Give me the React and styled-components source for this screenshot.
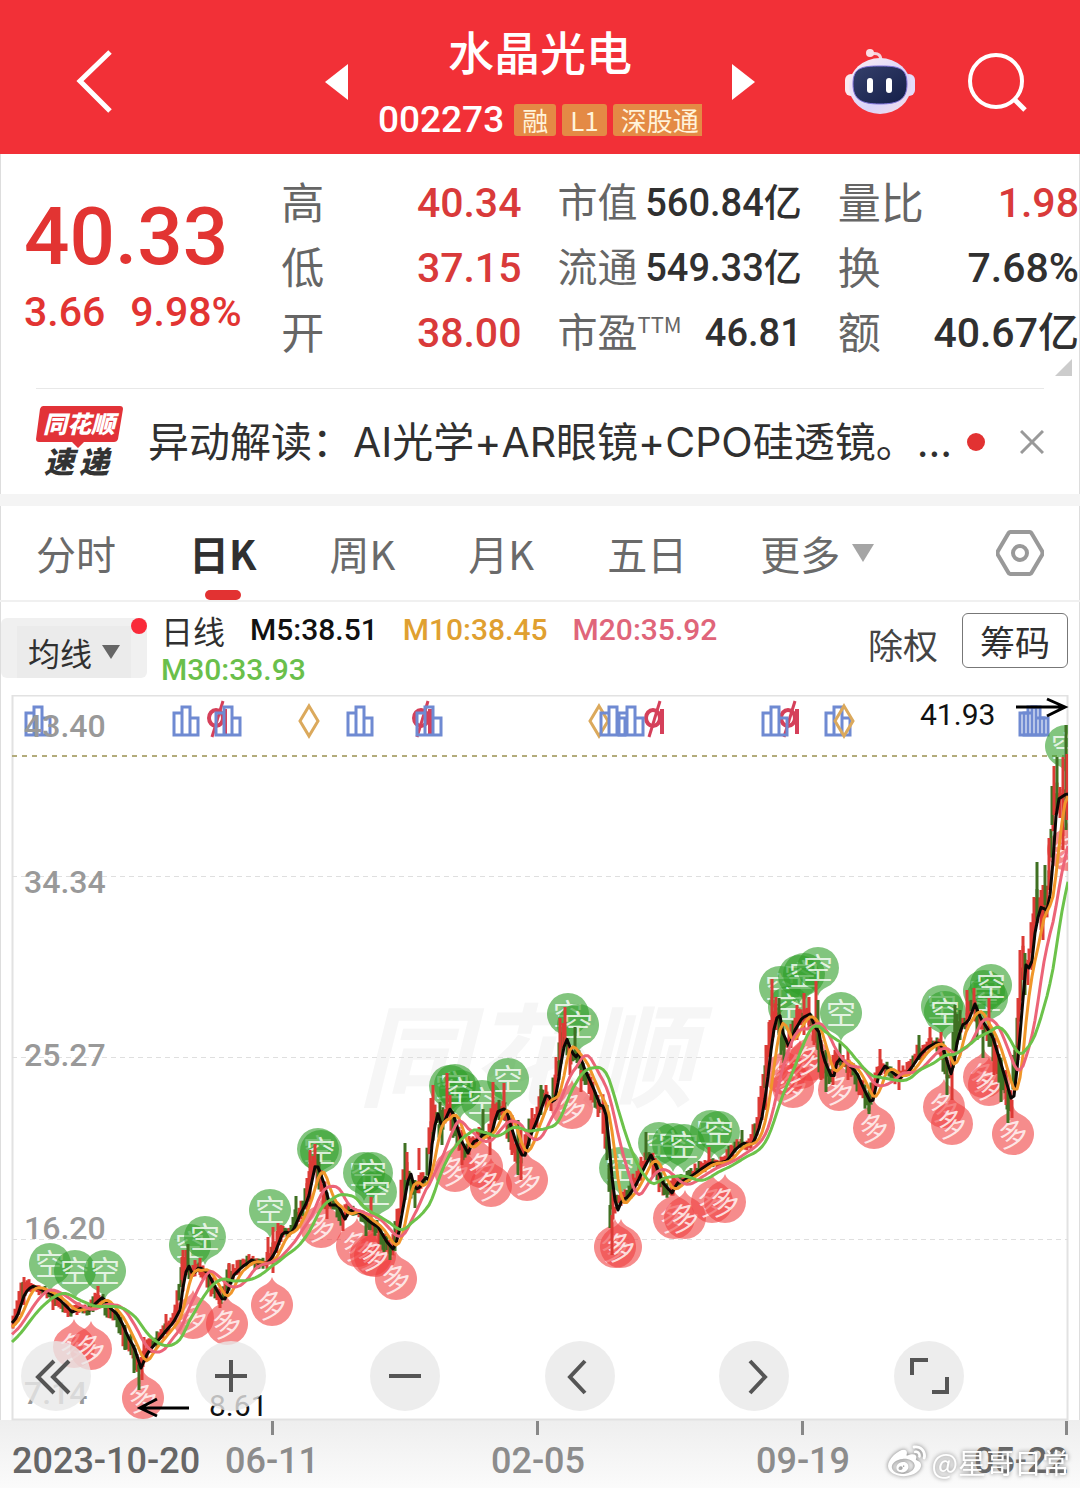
import React from 'react';
import styled, { createGlobalStyle } from 'styled-components';
import { FaWeibo } from 'react-icons/fa';

const GlobalStyle = createGlobalStyle`
  * {
    box-sizing: border-box;
  }

  body {
    margin: 0;
    background: #fff;
    color: #303030;
    font-family: 'Noto Sans CJK SC', sans-serif;
  }

  button {
    margin: 0;
    padding: 0;
    border: 0;
    background: none;
    color: inherit;
    font: inherit;
    cursor: pointer;
  }

  svg {
    display: block;
  }
`;

const tags = ['融', 'L1', '深股通'];

const quoteColumns = [
  [
    { label: '高', value: '40.34', up: true },
    { label: '低', value: '37.15', up: true },
    { label: '开', value: '38.00', up: true },
  ],
  [
    { label: '市值', value: '560.84亿', small: true },
    { label: '流通', value: '549.33亿', small: true },
    { label: '市盈', sup: 'TTM', value: '46.81', small: true },
  ],
  [
    { label: '量比', value: '1.98', up: true },
    { label: '换', value: '7.68%' },
    { label: '额', value: '40.67亿' },
  ],
];

const tabs = ['分时', '日K', '周K', '月K', '五日'];

const averages = [
  { label: 'M5:38.51', color: '#111' },
  { label: 'M10:38.45', color: '#e0a030' },
  { label: 'M20:35.92', color: '#e0657a' },
  { label: 'M30:33.93', color: '#6abf4b' },
];

// five day average as x, y pairs
const ma5 = [
  -60, 1395, -40, 1375, -20, 1352, 0, 1333, 12, 1323, 17, 1317, 25, 1293, 32, 1286, 40, 1289, 50, 1293,
  60, 1300, 72, 1312, 82, 1308, 90, 1310, 97, 1302, 103, 1297, 110, 1308, 117, 1314, 123, 1325, 128, 1337,
  134, 1347, 141, 1368, 148, 1352, 157, 1342, 165, 1332, 173, 1323, 180, 1310, 184, 1280, 188, 1264,
  193, 1275, 199, 1267, 208, 1273, 215, 1287, 224, 1302, 233, 1276, 242, 1267, 252, 1260, 260, 1264,
  268, 1263, 275, 1253, 283, 1232, 292, 1233, 300, 1215, 308, 1200, 316, 1162, 323, 1180, 330, 1205,
  338, 1205, 345, 1219, 350, 1210, 359, 1212, 370, 1222, 378, 1227, 387, 1242, 394, 1250, 398, 1237,
  405, 1197, 410, 1170, 415, 1190, 420, 1187, 425, 1177, 429, 1180, 433, 1133, 438, 1114, 442, 1127,
  446, 1118, 451, 1107, 457, 1127, 462, 1142, 468, 1153, 473, 1142, 478, 1140, 485, 1132, 491, 1137,
  497, 1112, 506, 1108, 510, 1123, 517, 1145, 524, 1159, 530, 1137, 538, 1118, 547, 1093, 554, 1105,
  558, 1083, 562, 1057, 566, 1037, 570, 1047, 575, 1058, 579, 1053, 585, 1070, 593, 1087, 600, 1105,
  605, 1107, 608, 1130, 612, 1177, 616, 1208, 618, 1210, 622, 1200, 628, 1197, 637, 1183, 643, 1170,
  651, 1155, 657, 1168, 663, 1183, 672, 1193, 677, 1183, 685, 1180, 693, 1175, 700, 1170, 710, 1163,
  719, 1163, 727, 1161, 735, 1150, 743, 1143, 752, 1145, 758, 1132, 763, 1113, 768, 1077, 773, 1033,
  779, 1010, 783, 1033, 789, 1047, 795, 1030, 802, 1018, 810, 1014, 815, 1027, 819, 1032, 823, 1057,
  833, 1080, 838, 1058, 847, 1063, 857, 1073, 863, 1087, 872, 1105, 878, 1077, 885, 1066, 892, 1072,
  900, 1078, 910, 1070, 920, 1055, 928, 1047, 938, 1042, 943, 1048, 952, 1077, 957, 1043, 962, 1025,
  968, 1022, 975, 1004, 980, 1017, 987, 1028, 993, 1038, 1002, 1067, 1013, 1105, 1018, 1060, 1022, 1010,
  1026, 965, 1031, 970, 1035, 933, 1040, 907, 1047, 910, 1051, 890, 1055, 833, 1057, 800, 1066, 794,
  1074, 794,
];

// widest bars: x, top, bottom, r(ise) or f(all)
const swings = `24 1277 1305 r,53 1290 1310 r,68 1303 1317 r,98 1286 1305 r,125 1325 1350 f,134 1345 1373 f,
139 1365 1390 f,142 1365 1380 r,144 1337 1355 r,166 1314 1330 r,182 1257 1280 r,186 1250 1275 r,188 1244 1270 f,
200 1258 1275 r,220 1290 1308 r,229 1263 1280 r,268 1237 1257 r,273 1227 1273 r,278 1223 1240 r,296 1196 1230 f,
307 1178 1210 r,310 1150 1200 r,315 1144 1170 r,318 1154 1180 f,327 1200 1219 r,343 1215 1231 r,366 1215 1236 f,
371 1197 1220 r,384 1240 1252 f,390 1245 1260 f,405 1143 1200 f,407 1152 1180 r,415 1180 1208 f,419 1148 1170 r,
431 1098 1132 r,433 1085 1130 r,440 1102 1135 f,442 1110 1145 f,447 1073 1120 r,450 1095 1120 r,462 1130 1165 r,
483 1109 1140 f,490 1130 1155 r,493 1082 1125 r,499 1100 1120 f,504 1083 1120 r,512 1115 1155 r,518 1120 1175 f,
521 1130 1180 r,532 1108 1130 r,541 1085 1115 f,546 1085 1110 r,556 1057 1100 r,560 1018 1060 r,565 1007 1045 r,
570 1050 1075 r,575 1027 1060 f,581 1070 1092 r,598 1095 1117 r,607 1105 1150 f,610 1205 1228 f,612 1215 1255 r,
646 1132 1160 f,664 1178 1195 f,709 1147 1165 r,742 1130 1148 f,762 1090 1120 r,766 1045 1110 r,770 1020 1050 r,
772 979 1040 r,776 997 1030 r,779 998 1035 f,784 1040 1063 f,797 1005 1040 r,804 993 1035 r,809 997 1025 r,
814 1020 1045 r,816 981 1025 r,818 1000 1050 f,821 1040 1080 r,826 1050 1092 f,833 1070 1085 r,840 1043 1065 f,
848 1050 1080 r,869 1090 1114 f,880 1049 1075 r,899 1060 1090 r,919 1035 1060 f,930 1027 1050 r,941 1032 1060 r,
947 1060 1095 f,952 1065 1100 r,955 1005 1055 f,960 1010 1040 f,967 990 1030 r,974 988 1010 r,977 1005 1040 f,
983 1030 1058 f,989 998 1030 r,994 1040 1075 r,1001 1060 1102 f,1006 1070 1105 r,1008 1090 1123 f,1012 1100 1118 r,
1015 1050 1090 f,1018 998 1060 r,1020 950 1010 r,1023 936 980 r,1025 953 995 f,1028 960 985 r,1032 925 970 r,
1034 897 940 r,1037 862 920 f,1041 890 930 r,1043 885 940 r,1045 865 905 f,1049 838 890 r,1052 786 825 f,
1054 766 815 r,1057 757 810 f,1060 787 818 r,1063 757 850 r,1066 725 830 f,1067 754 820 r`
  .split(',')
  .map((s) => s.trim().split(' '))
  .map(([x, top, bottom, kind]) => ({ x: +x, top: +top, bottom: +bottom, rise: kind === 'r' }));

const sellPins = [
  [50, 1264], [75, 1271], [105, 1271], [190, 1245], [205, 1237], [270, 1210], [318, 1149], [321, 1151],
  [364, 1173], [372, 1173], [376, 1192], [450, 1086], [455, 1085], [460, 1091], [482, 1101], [508, 1079],
  [568, 1014], [578, 1025], [620, 1168], [659, 1143], [673, 1144], [684, 1145], [711, 1131], [719, 1132],
  [780, 987], [789, 1007], [799, 976], [804, 974], [818, 968], [841, 1013], [942, 1006], [945, 1012],
  [984, 991], [987, 998], [991, 985], [1066, 746],
];

const buyPins = [
  [74, 1347], [91, 1349], [143, 1398], [193, 1318], [227, 1324], [272, 1305], [321, 1227], [357, 1246],
  [371, 1255], [375, 1256], [396, 1279], [455, 1171], [482, 1167], [491, 1186], [527, 1180], [572, 1108],
  [615, 1247], [621, 1247], [674, 1218], [685, 1218], [712, 1202], [725, 1202], [785, 1074], [793, 1087],
  [800, 1068], [810, 1060], [839, 1090], [874, 1128], [944, 1107], [952, 1124], [984, 1077], [989, 1085],
  [1013, 1134], [1068, 850],
];

const STEP = 2;

const ma5At = (x) => {
  let i = 0;
  while (i < ma5.length - 4 && ma5[i + 2] < x) i += 2;
  const part = Math.min(1, (x - ma5[i]) / (ma5[i + 2] - ma5[i]));
  return ma5[i + 1] + part * (ma5[i + 3] - ma5[i + 1]);
};

const averageAt = (x, span) => {
  let sum = 0;
  let count = 0;
  for (let d = 0; d <= span; d += 2) {
    sum += ma5At(x - d);
    count += 1;
  }
  return sum / count;
};

const linePath = (span) => {
  let d = '';
  for (let x = 12; x <= 1068; x += 3) {
    const y = span ? averageAt(x, span) : ma5At(x);
    d += `${d ? 'L' : 'M'}${x} ${y.toFixed(1)}`;
  }
  return d;
};

const makeCandles = () => {
  const out = [];
  let seed = 7;
  const next = () => {
    seed = (seed * 16807) % 2147483647;
    return seed / 2147483647;
  };
  for (let x = 13; x < 1066; x += STEP) {
    const mid = ma5At(x + 3);
    const slope = Math.abs(ma5At(x + 5) - ma5At(x - 1));
    const reach = Math.min(18, 4 + slope * 0.5);
    const falling = ma5At(x + 4) > ma5At(x);
    const top = mid - reach * (0.3 + next());
    const bottom = mid + reach * (0.3 + next());
    out.push({ x, top, bottom, rise: next() > (falling ? 0.55 : 0.25) });
  }
  return [...out, ...swings];
};

const candles = makeCandles();

const BarsIcon = ({ x }) => (
  <path
    d={`M${x + 1} 735V713h8V707h8V718h8V735ZM${x + 9} 713V735M${x + 17} 718V735`}
    fill='none'
    stroke='#6f8ad2'
    strokeWidth='3'
  />
);

const DiamondIcon = ({ x }) => (
  <path d={`M${x} 706L${x + 9} 721L${x} 736L${x - 9} 721Z`} fill='none' stroke='#dba95c' strokeWidth='3' />
);

const SlashIcon = ({ x }) => (
  <g fill='none' stroke='#d5405a'>
    <ellipse cx={x - 1} cy='718' rx='7' ry='8' strokeWidth='4' />
    <path d={`M${x + 8} 709V734`} strokeWidth='4' />
    <path d={`M${x - 5} 737L${x + 6} 701`} strokeWidth='3' />
  </g>
);

const Pin = ({ x, y, sell }) => {
  const tail = sell ? 1 : -1;
  return (
    <g>
      <path
        d={`M${x - 9} ${y + 19 * tail}Q${x - 2} ${y + 22 * tail} ${x} ${y + 28 * tail}Q${x + 2} ${y + 22 * tail} ${
          x + 9
        } ${y + 19 * tail}A21 21 0 1 ${sell ? 0 : 1} ${x - 9} ${y + 19 * tail}Z`}
        fill={sell ? '#2f9f28' : '#f04040'}
        fillOpacity='0.6'
      />
      <PinText x={x} y={y + 11} transform={sell ? undefined : `rotate(-14 ${x} ${y})`}>
        {sell ? '空' : '多'}
      </PinText>
    </g>
  );
};

const Chart = () => (
  <ChartSvg viewBox='0 695 1080 793' role='img' aria-label='日K'>
    <defs>
      <linearGradient id='axis' x1='0' y1='0' x2='0' y2='1'>
        <stop offset='0' stopColor='#eeeeee' />
        <stop offset='1' stopColor='#fbfbfb' />
      </linearGradient>
      <clipPath id='plot'>
        <rect x='10' y='695' width='1058' height='725' />
      </clipPath>
    </defs>
    <rect x='0' y='1420' width='1080' height='68' fill='url(#axis)' />
    <Watermark x='358' y='1098'>
      同花顺
    </Watermark>
    <rect x='12.5' y='695.5' width='1055' height='724' fill='none' stroke='#e2e2e2' strokeWidth='2' />
    <path d='M12 876.5H1068M12 1057.5H1068M12 1239.5H1068' stroke='#dfdfdf' strokeDasharray='5 4' />
    <path d='M12 756H1068' stroke='#b3ac7c' strokeWidth='2' strokeDasharray='5 5' />

    {[214, 419, 651, 786].map((x) => (
      <SlashIcon key={x} x={x + 3} />
    ))}
    <DiamondIcon x={309} />
    <DiamondIcon x={599} />
    {[25, 173, 215, 347, 416, 600, 618, 762, 825, 1019, 1023].map((x) => (
      <BarsIcon key={x} x={x} />
    ))}
    <DiamondIcon x={844} />

    {[
      ['43.40', 737],
      ['34.34', 893],
      ['25.27', 1066],
      ['16.20', 1239],
      ['7.14', 1404],
    ].map(([label, y]) => (
      <ScaleText key={label} x='24' y={y}>
        {label}
      </ScaleText>
    ))}

    <g clipPath='url(#plot)'>
      {buyPins.map(([x, y]) => (
        <Pin key={`${x}-${y}`} x={x} y={y} />
      ))}
      {sellPins.map(([x, y]) => (
        <Pin key={`${x}-${y}`} x={x} y={y} sell />
      ))}
      {candles.map((c, i) => (
        <rect
          key={i}
          x={c.x - 1.5}
          y={c.top}
          width='3'
          height={c.bottom - c.top}
          fill={c.rise ? '#dc3a35' : '#3f7022'}
        />
      ))}
      <g fill='none' strokeWidth='3' strokeLinejoin='round'>
        <path d={linePath(0)} stroke='#0c0805' />
        <path d={linePath(10)} stroke='#f0962a' />
        <path d={linePath(26)} stroke='#ec6478' />
        <path d={linePath(42)} stroke='#6cc24a' />
      </g>
    </g>

    <PeakText x='920' y='725'>
      41.93
    </PeakText>
    <path d='M1016 707H1065M1047 699L1065 707L1047 716' fill='none' stroke='#000' strokeWidth='3' />
    <PeakText x='209' y='1416'>
      8.61
    </PeakText>
    <path d='M189 1408H140M157 1399L140 1408L157 1416' fill='none' stroke='#000' strokeWidth='3' />

    <path d='M272.5 1421V1435M537.5 1421V1435M802.5 1421V1435M1066.5 1421V1435' stroke='#888' strokeWidth='3' />
    <DateText x='12' y='1473' fill='#666'>
      2023-10-20
    </DateText>
    {[
      ['06-11', 272],
      ['02-05', 538],
      ['09-19', 803],
    ].map(([label, x]) => (
      <DateText key={label} x={x} y='1473' fill='#8c8c8c' textAnchor='middle'>
        {label}
      </DateText>
    ))}
    <DateText x='1068' y='1473' fill='#666' textAnchor='end'>
      05-22
    </DateText>
  </ChartSvg>
);

const controls = [
  { name: '最早', path: 'M21 20L5 36L21 52M36 20L20 36L36 52', shift: 12 },
  { name: '放大', path: 'M19 35H51M35 19V51' },
  { name: '缩小', path: 'M19 35H51' },
  { name: '向左', path: 'M40 20L25 36L40 52' },
  { name: '向右', path: 'M31 20L46 36L31 52' },
  { name: '全屏', path: 'M18 34V19H34M38 51H53V36' },
];

const Robot = () => (
  <svg width='72' height='68' viewBox='0 0 72 68' aria-hidden='true'>
    <defs>
      <linearGradient id='shell' x1='0' y1='0' x2='1' y2='1'>
        <stop offset='0' stopColor='#fff0f2' />
        <stop offset='0.6' stopColor='#d9d4fa' />
        <stop offset='1' stopColor='#f6dfe8' />
      </linearGradient>
      <linearGradient id='visor' x1='0' y1='0' x2='1' y2='1'>
        <stop offset='0' stopColor='#35406b' />
        <stop offset='1' stopColor='#141e48' />
      </linearGradient>
    </defs>
    <path d='M27 6C35 4 37 8 37 13' fill='none' stroke='#f5d3dc' strokeWidth='3' />
    <circle cx='26' cy='5' r='4' fill='#fbdfe6' />
    <rect x='1' y='26' width='12' height='22' rx='6' fill='#fbe9ef' />
    <rect x='59' y='26' width='12' height='22' rx='6' fill='#e4dcfa' />
    <ellipse cx='36' cy='38' rx='31' ry='28' fill='url(#shell)' />
    <path
      d='M36 18C55 18 63 20 63 36C63 52 54 56 36 56C18 56 9 52 9 36C9 20 17 18 36 18Z'
      fill='url(#visor)'
      stroke='#8174dc'
    />
    <rect x='23' y='30' width='6' height='15' rx='3' fill='#fff' />
    <rect x='42' y='30' width='6' height='15' rx='3' fill='#fff' />
  </svg>
);

const NewsLogo = () => (
  <LogoSvg width='88' height='74' viewBox='0 0 88 74' aria-hidden='true'>
    <path
      d='M7 1H84Q87 1 87 4L82 34Q81 37 78 37H48L42 43L36 37H3Q0 37 0 34L4 4Q5 1 7 1Z'
      fill='#e23238'
    />
    <LogoText x='7' y='28' fill='#fff' fontSize='24'>
      同花顺
    </LogoText>
    <LogoText x='8' y='68' fill='#333' fontSize='30'>
      速
    </LogoText>
    <LogoText x='43' y='68' fill='#333' fontSize='30'>
      递
    </LogoText>
  </LogoSvg>
);

const App = () => {
  return (
    <Page>
      <GlobalStyle />
      <Header>
        <BackButton aria-label='返回'>
          <svg width='38' height='64' viewBox='0 0 38 64' fill='none' stroke='#fff' strokeWidth='5'>
            <path d='M34 2L4 31L34 61' />
          </svg>
        </BackButton>
        <Switcher>
          <button aria-label='上一只'>
            <svg width='23' height='36' viewBox='0 0 23 36' fill='#fff'>
              <path d='M23 0V36L0 18Z' />
            </svg>
          </button>
          <StockName>
            <h1>水晶光电</h1>
            <CodeRow>
              <Code>002273</Code>
              {tags.map((tag) => (
                <Tag key={tag}>{tag}</Tag>
              ))}
            </CodeRow>
          </StockName>
          <button aria-label='下一只'>
            <svg width='23' height='36' viewBox='0 0 23 36' fill='#fff'>
              <path d='M0 0V36L23 18Z' />
            </svg>
          </button>
        </Switcher>
        <HeaderActions>
          <button aria-label='助手'>
            <Robot />
          </button>
          <button aria-label='搜索'>
            <svg width='60' height='60' viewBox='0 0 60 60' fill='none' stroke='#fff' strokeWidth='4'>
              <circle cx='28' cy='29' r='26' />
              <path d='M46 47L57 58' strokeWidth='5' />
            </svg>
          </button>
        </HeaderActions>
      </Header>

      <Body>
        <Quote>
          <PriceBlock>
            <Price>40.33</Price>
            <Change>
              <span>3.66</span>
              <span>9.98%</span>
            </Change>
          </PriceBlock>
          {quoteColumns.map((rows, i) => (
            <QuoteList key={i}>
              {rows.map(({ label, sup, value, up, small }) => (
                <QuoteRow key={label} $small={small}>
                  <dt>
                    {label}
                    {sup && <Sup>{sup}</Sup>}
                  </dt>
                  <QuoteValue $up={up} $small={small}>
                    {value}
                  </QuoteValue>
                </QuoteRow>
              ))}
            </QuoteList>
          ))}
          <Corner aria-hidden='true' />
        </Quote>

        <News>
          <NewsLogo />
          <NewsTitle href='#news'>异动解读：AI光学+AR眼镜+CPO硅透镜。...</NewsTitle>
          <Dot $size={18} />
          <CloseButton aria-label='关闭'>
            <svg width='24' height='24' viewBox='0 0 24 24' fill='none' stroke='#999' strokeWidth='3'>
              <path d='M1 1L23 23M23 1L1 23' />
            </svg>
          </CloseButton>
        </News>

        <Tabs>
          {tabs.map((tab) => (
            <Tab key={tab} $active={tab === '日K'}>
              {tab}
            </Tab>
          ))}
          <Tab>
            更多
            <Arrow $size={11} $color='#a5a5a5' />
          </Tab>
          <SettingsButton aria-label='设置'>
            <svg width='48' height='46' viewBox='0 0 48 46' fill='none' stroke='#999' strokeWidth='4'>
              <path d='M14 2H34Q35 2 36 4L46 21Q47 23 46 25L36 42Q35 44 34 44H14Q13 44 12 42L2 25Q1 23 2 21L12 4Q13 2 14 2Z' />
              <circle cx='24' cy='23' r='7' />
            </svg>
          </SettingsButton>
        </Tabs>

        <Legend>
          <AverageButton>
            <span>
              均线
              <Arrow $size={9} $color='#666' />
            </span>
            <ButtonBadge $size={16} />
          </AverageButton>
          <Averages>
            <Period>日线</Period>
            {averages.map(({ label, color }) => (
              <Average key={label} $color={color}>
                {label}
              </Average>
            ))}
          </Averages>
          <RightsButton>除权</RightsButton>
          <ChipsButton>筹码</ChipsButton>
        </Legend>

        <ChartArea>
          <Chart />
          <Controls>
            {controls.map(({ name, path, shift = 0 }) => (
              <RoundButton key={name} aria-label={name}>
                <svg
                  width='70'
                  height='70'
                  viewBox={`${-shift} 0 70 70`}
                  fill='none'
                  stroke='#555'
                  strokeWidth='4'
                >
                  <path d={path} />
                </svg>
              </RoundButton>
            ))}
          </Controls>
          <Credit>
            <FaWeibo size={38} />
            @星哥日常
          </Credit>
        </ChartArea>
      </Body>
    </Page>
  );
};

const Page = styled.main`
  overflow: hidden;
`;

const Header = styled.header`
  display: grid;
  grid-template-columns: 1fr auto 1fr;
  align-items: center;
  height: 154px;
  padding: 10px 52px 0 76px;
  background: #f23037;
  color: #fff;
`;

const BackButton = styled.button`
  justify-self: start;
`;

const Switcher = styled.div`
  display: flex;
  align-items: center;
  gap: 30px;
  margin-right: 24px;
`;

const StockName = styled.div`
  width: 324px;

  h1 {
    margin: 0;
    font-size: 46px;
    font-weight: 500;
    line-height: 68px;
    text-align: center;
  }
`;

const CodeRow = styled.div`
  display: flex;
  align-items: center;
  gap: 6px;
  height: 64px;
  padding-top: 8px;
  overflow: hidden;
  white-space: nowrap;
`;

const Code = styled.span`
  margin-right: 4px;
  font: 500 37px/40px Roboto, sans-serif;
`;

const Tag = styled.span`
  flex: none;
  padding: 0 8px;
  border-radius: 3px;
  background: #e48a45;
  color: #fff3da;
  font-size: 26px;
  line-height: 32px;
`;

const HeaderActions = styled.div`
  display: flex;
  justify-content: flex-end;
  align-items: center;
  gap: 52px;
`;

const Body = styled.div`
  box-shadow: inset 1px 0 #ddd, inset -1px 0 #ddd;
`;

const Quote = styled.section`
  position: relative;
  display: grid;
  grid-template-columns: 221fr 240fr 244fr 241fr;
  gap: 36px;
  padding: 16px 1px 23px 24px;
`;

const PriceBlock = styled.div`
  padding-top: 22px;
  color: #e23432;
  font-family: Roboto, sans-serif;
  font-weight: 500;
`;

const Price = styled.div`
  font-size: 80px;
  line-height: 90px;
`;

const Change = styled.div`
  display: flex;
  gap: 25px;
  font-size: 41px;
  line-height: 60px;
  white-space: nowrap;
`;

const QuoteList = styled.dl`
  margin: 0;
`;

const QuoteRow = styled.div`
  display: flex;
  justify-content: space-between;
  height: 65px;
  color: #666;
  font-size: ${({ $small }) => ($small ? 40 : 43)}px;
  line-height: 60px;
  white-space: nowrap;
`;

const Sup = styled.sup`
  font-size: 22px;
  line-height: 22px;
  vertical-align: 14px;
`;

const QuoteValue = styled.dd`
  margin: 0;
  color: ${({ $up }) => ($up ? '#d93a3a' : '#303030')};
  font-family: Roboto, 'Noto Sans CJK SC', sans-serif;
  font-size: ${({ $small }) => ($small ? 38 : 41)}px;
  font-weight: 500;
  line-height: 66px;
`;

const Corner = styled.i`
  position: absolute;
  right: 8px;
  bottom: 12px;
  border-bottom: 17px solid #ccc;
  border-left: 17px solid transparent;
`;

const News = styled.section`
  display: flex;
  align-items: center;
  height: 106px;
  margin: 0 36px;
  border-top: 1px solid #e8e8e8;
`;

const LogoSvg = styled.svg`
  flex: none;
  overflow: visible;
`;

const NewsTitle = styled.a`
  flex: 1;
  margin-left: 24px;
  overflow: hidden;
  color: #303030;
  font-family: Inter, 'Noto Sans CJK SC', sans-serif;
  font-size: 41px;
  line-height: 60px;
  text-decoration: none;
  white-space: nowrap;
`;

const Dot = styled.i`
  flex: none;
  width: ${({ $size }) => $size}px;
  height: ${({ $size }) => $size}px;
  border-radius: 50%;
  background: #e23232;
`;

const CloseButton = styled.button`
  margin-left: 35px;
`;

const Tabs = styled.nav`
  display: flex;
  align-items: center;
  gap: 73px;
  height: 108px;
  padding: 0 36px;
  border-top: 12px solid #f4f4f4;
  border-bottom: 2px solid #f0f0f0;
`;

const Tab = styled.button`
  position: relative;
  display: flex;
  align-items: center;
  gap: 12px;
  height: 94px;
  color: ${({ $active }) => ($active ? '#303030' : '#6a6a6a')};
  font-size: 40px;
  font-weight: ${({ $active }) => ($active ? 700 : 400)};

  &::after {
    content: ${({ $active }) => ($active ? "''" : 'none')};
    position: absolute;
    bottom: 0;
    left: 50%;
    width: 36px;
    height: 10px;
    margin-left: -18px;
    border-radius: 5px;
    background: #e23232;
  }
`;

const Arrow = styled.i`
  border-top: ${({ $size }) => $size * 2 - 4}px solid ${({ $color }) => $color};
  border-right: ${({ $size }) => $size}px solid transparent;
  border-left: ${({ $size }) => $size}px solid transparent;
`;

const SettingsButton = styled.button`
  margin-left: auto;
`;

const Legend = styled.section`
  display: flex;
  align-items: flex-start;
  height: 93px;
  padding: 8px 12px 0 1px;
`;

const AverageButton = styled.button`
  position: relative;
  flex: none;
  width: 146px;
  height: 60px;
  margin-top: 8px;
  padding: 8px 16px 0;
  border-radius: 6px;
  background: #f0f0f0;
  font-size: 32px;
  line-height: 52px;

  span {
    display: flex;
    align-items: center;
    justify-content: center;
    gap: 10px;
    background: #ebebeb;
  }
`;

const ButtonBadge = styled(Dot)`
  position: absolute;
  top: 0;
  right: 0;
  background: #fa2a3a;
`;

const Averages = styled.div`
  display: flex;
  flex: 1;
  flex-wrap: wrap;
  column-gap: 25px;
  margin-left: 14px;
  padding-right: 80px;
  line-height: 40px;
`;

const Period = styled.span`
  font-size: 32px;
`;

const Average = styled.span`
  color: ${({ $color }) => $color};
  font-family: Roboto, sans-serif;
  font-size: 30px;
  font-weight: 500;
`;

const RightsButton = styled.button`
  flex: none;
  margin-top: 8px;
  color: #444;
  font-size: 35px;
  line-height: 52px;
`;

const ChipsButton = styled.button`
  flex: none;
  margin-top: 3px;
  margin-left: 24px;
  padding: 0 17px;
  border: 1px solid #777;
  border-radius: 6px;
  font-size: 35px;
  line-height: 53px;
`;

const ChartArea = styled.section`
  position: relative;
`;

const ChartSvg = styled.svg`
  width: 100%;
`;

const Watermark = styled.text`
  fill: #f6f6f6;
  font-size: 112px;
  font-style: italic;
  font-weight: 700;
`;

const ScaleText = styled.text`
  fill: #999;
  font-family: Roboto, sans-serif;
  font-size: 32px;
  font-weight: 500;
`;

const PeakText = styled.text`
  fill: #111;
  font-family: Roboto, sans-serif;
  font-size: 30px;
`;

const DateText = styled.text`
  font-family: Roboto, sans-serif;
  font-size: 36px;
  font-weight: 500;
`;

const PinText = styled.text`
  fill: #fff;
  fill-opacity: 0.8;
  font-size: 30px;
  text-anchor: middle;
`;

const LogoText = styled.text`
  font-style: italic;
  font-weight: 900;
`;

const Controls = styled.div`
  position: absolute;
  right: 116px;
  bottom: 77px;
  left: 21px;
  display: flex;
  justify-content: space-between;
`;

const RoundButton = styled.button`
  width: 70px;
  height: 70px;
  border-radius: 50%;
  background: rgba(232, 232, 232, 0.8);
`;

const Credit = styled.div`
  position: absolute;
  right: 10px;
  bottom: 4px;
  display: flex;
  align-items: center;
  gap: 6px;
  color: #fff;
  font-size: 28px;
  line-height: 44px;
  filter: drop-shadow(0 0 2px #777);
`;

export default App;
